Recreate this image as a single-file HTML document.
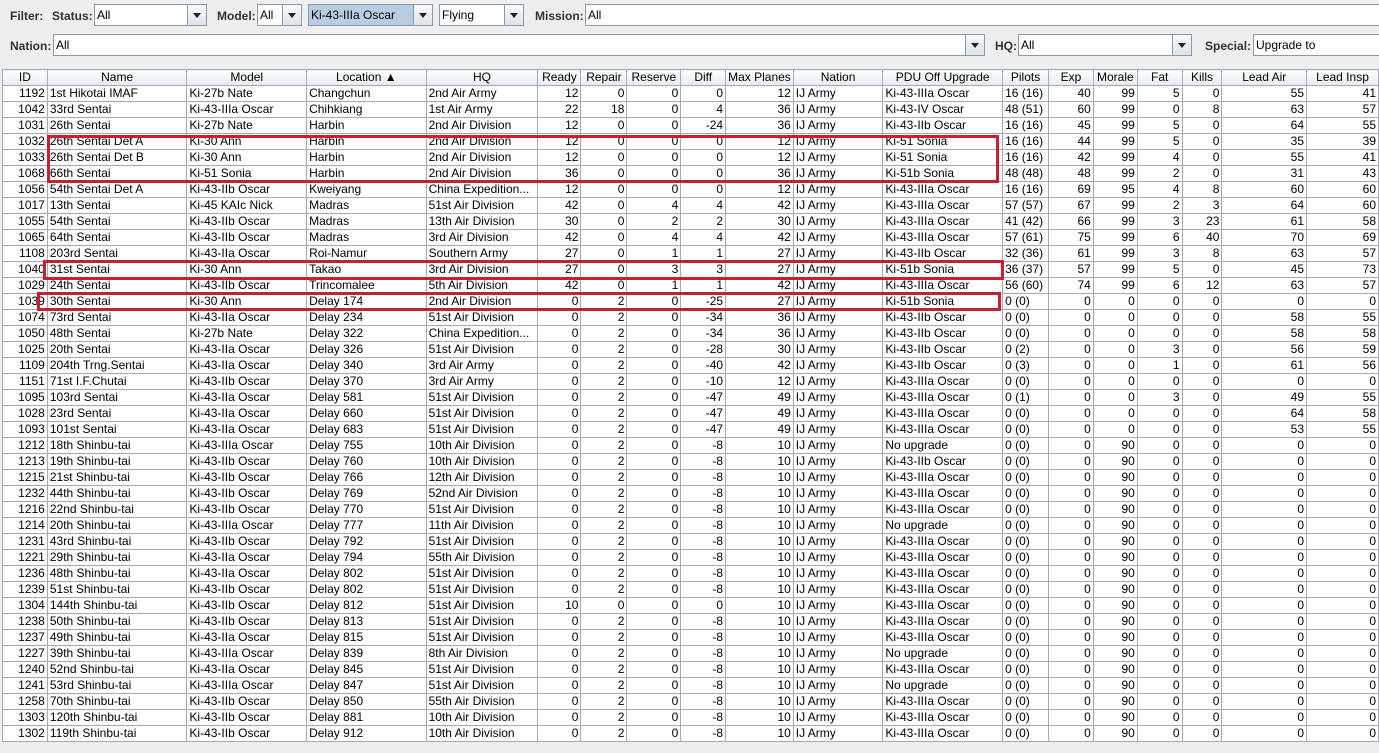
<!DOCTYPE html>
<html><head><meta charset="utf-8"><style>
body{margin:0;width:1379px;height:753px;background:#eeeeee;font-family:"Liberation Sans",Arial,sans-serif;font-size:12px;color:#000;position:relative;overflow:hidden}
.lbl{position:absolute;font-weight:bold;color:#333;top:9px}
.cb{position:absolute;height:22px;border:1px solid #8a9aae;background:#fff;box-sizing:border-box;line-height:20px;padding-left:2px}
.cb .ar{position:absolute;right:0;top:0;width:18px;height:20px;border-left:1px solid #8a9aae;background:linear-gradient(#fafafa,#dde3ea)}
.cb .ar:after{content:"";position:absolute;left:5px;top:8px;border-left:4px solid transparent;border-right:4px solid transparent;border-top:5px solid #222}
table{position:absolute;left:2px;top:69px;border-collapse:collapse;table-layout:fixed;background:#fff;border:1px solid #8e98a8}
td,th{border:1px solid #a3aab6;height:15px;line-height:15px;padding:0 2px;white-space:nowrap;overflow:hidden;font-weight:normal}
th{background:linear-gradient(#fdfdfd,#e6ebf1);text-align:center;height:15px}
td.r{text-align:right}
.red{position:absolute;border:3px solid #c8202c;box-sizing:border-box}
</style></head><body>
<div class="lbl" style="left:10px">Filter:</div>
<div class="lbl" style="left:52px">Status:</div>
<div class="cb" style="left:94px;top:4px;width:113px">All<div class="ar"></div></div>
<div class="lbl" style="left:217px">Model:</div>
<div class="cb" style="left:257px;top:4px;width:45px">All<div class="ar"></div></div>
<div class="cb" style="left:308px;top:4px;width:125px;background:#b8cde2">Ki-43-IIIa Oscar<div class="ar"></div></div>
<div class="cb" style="left:439px;top:4px;width:85px">Flying<div class="ar"></div></div>
<div class="lbl" style="left:535px">Mission:</div>
<div class="cb" style="left:585px;top:4px;width:800px">All</div>
<div class="lbl" style="left:10px;top:39px">Nation:</div>
<div class="cb" style="left:53px;top:34px;width:932px">All<div class="ar"></div></div>
<div class="lbl" style="left:995px;top:39px">HQ:</div>
<div class="cb" style="left:1018px;top:34px;width:174px">All<div class="ar"></div></div>
<div class="lbl" style="left:1205px;top:39px">Special:</div>
<div class="cb" style="left:1253px;top:34px;width:130px">Upgrade to</div>
<table>
<colgroup><col style="width:45px"><col style="width:140px"><col style="width:120px"><col style="width:120px"><col style="width:112px"><col style="width:43px"><col style="width:46px"><col style="width:54px"><col style="width:45px"><col style="width:65px"><col style="width:90px"><col style="width:120px"><col style="width:46px"><col style="width:45px"><col style="width:44px"><col style="width:45px"><col style="width:40px"><col style="width:85px"><col style="width:72px"></colgroup>
<tr><th>ID</th><th>Name</th><th>Model</th><th>Location ▲</th><th>HQ</th><th>Ready</th><th>Repair</th><th>Reserve</th><th>Diff</th><th>Max Planes</th><th>Nation</th><th>PDU Off Upgrade</th><th>Pilots</th><th>Exp</th><th>Morale</th><th>Fat</th><th>Kills</th><th>Lead Air</th><th>Lead Insp</th></tr>
<tr><td class="r">1192</td><td>1st Hikotai IMAF</td><td>Ki-27b Nate</td><td>Changchun</td><td>2nd Air Army</td><td class="r">12</td><td class="r">0</td><td class="r">0</td><td class="r">0</td><td class="r">12</td><td>IJ Army</td><td>Ki-43-IIIa Oscar</td><td>16 (16)</td><td class="r">40</td><td class="r">99</td><td class="r">5</td><td class="r">0</td><td class="r">55</td><td class="r">41</td></tr>
<tr><td class="r">1042</td><td>33rd Sentai</td><td>Ki-43-IIIa Oscar</td><td>Chihkiang</td><td>1st Air Army</td><td class="r">22</td><td class="r">18</td><td class="r">0</td><td class="r">4</td><td class="r">36</td><td>IJ Army</td><td>Ki-43-IV Oscar</td><td>48 (51)</td><td class="r">60</td><td class="r">99</td><td class="r">0</td><td class="r">8</td><td class="r">63</td><td class="r">57</td></tr>
<tr><td class="r">1031</td><td>26th Sentai</td><td>Ki-27b Nate</td><td>Harbin</td><td>2nd Air Division</td><td class="r">12</td><td class="r">0</td><td class="r">0</td><td class="r">-24</td><td class="r">36</td><td>IJ Army</td><td>Ki-43-IIb Oscar</td><td>16 (16)</td><td class="r">45</td><td class="r">99</td><td class="r">5</td><td class="r">0</td><td class="r">64</td><td class="r">55</td></tr>
<tr><td class="r">1032</td><td>26th Sentai Det A</td><td>Ki-30 Ann</td><td>Harbin</td><td>2nd Air Division</td><td class="r">12</td><td class="r">0</td><td class="r">0</td><td class="r">0</td><td class="r">12</td><td>IJ Army</td><td>Ki-51 Sonia</td><td>16 (16)</td><td class="r">44</td><td class="r">99</td><td class="r">5</td><td class="r">0</td><td class="r">35</td><td class="r">39</td></tr>
<tr><td class="r">1033</td><td>26th Sentai Det B</td><td>Ki-30 Ann</td><td>Harbin</td><td>2nd Air Division</td><td class="r">12</td><td class="r">0</td><td class="r">0</td><td class="r">0</td><td class="r">12</td><td>IJ Army</td><td>Ki-51 Sonia</td><td>16 (16)</td><td class="r">42</td><td class="r">99</td><td class="r">4</td><td class="r">0</td><td class="r">55</td><td class="r">41</td></tr>
<tr><td class="r">1068</td><td>66th Sentai</td><td>Ki-51 Sonia</td><td>Harbin</td><td>2nd Air Division</td><td class="r">36</td><td class="r">0</td><td class="r">0</td><td class="r">0</td><td class="r">36</td><td>IJ Army</td><td>Ki-51b Sonia</td><td>48 (48)</td><td class="r">48</td><td class="r">99</td><td class="r">2</td><td class="r">0</td><td class="r">31</td><td class="r">43</td></tr>
<tr><td class="r">1056</td><td>54th Sentai Det A</td><td>Ki-43-IIb Oscar</td><td>Kweiyang</td><td>China Expedition...</td><td class="r">12</td><td class="r">0</td><td class="r">0</td><td class="r">0</td><td class="r">12</td><td>IJ Army</td><td>Ki-43-IIIa Oscar</td><td>16 (16)</td><td class="r">69</td><td class="r">95</td><td class="r">4</td><td class="r">8</td><td class="r">60</td><td class="r">60</td></tr>
<tr><td class="r">1017</td><td>13th Sentai</td><td>Ki-45 KAIc Nick</td><td>Madras</td><td>51st Air Division</td><td class="r">42</td><td class="r">0</td><td class="r">4</td><td class="r">4</td><td class="r">42</td><td>IJ Army</td><td>Ki-43-IIIa Oscar</td><td>57 (57)</td><td class="r">67</td><td class="r">99</td><td class="r">2</td><td class="r">3</td><td class="r">64</td><td class="r">60</td></tr>
<tr><td class="r">1055</td><td>54th Sentai</td><td>Ki-43-IIb Oscar</td><td>Madras</td><td>13th Air Division</td><td class="r">30</td><td class="r">0</td><td class="r">2</td><td class="r">2</td><td class="r">30</td><td>IJ Army</td><td>Ki-43-IIIa Oscar</td><td>41 (42)</td><td class="r">66</td><td class="r">99</td><td class="r">3</td><td class="r">23</td><td class="r">61</td><td class="r">58</td></tr>
<tr><td class="r">1065</td><td>64th Sentai</td><td>Ki-43-IIb Oscar</td><td>Madras</td><td>3rd Air Division</td><td class="r">42</td><td class="r">0</td><td class="r">4</td><td class="r">4</td><td class="r">42</td><td>IJ Army</td><td>Ki-43-IIIa Oscar</td><td>57 (61)</td><td class="r">75</td><td class="r">99</td><td class="r">6</td><td class="r">40</td><td class="r">70</td><td class="r">69</td></tr>
<tr><td class="r">1108</td><td>203rd Sentai</td><td>Ki-43-IIa Oscar</td><td>Roi-Namur</td><td>Southern Army</td><td class="r">27</td><td class="r">0</td><td class="r">1</td><td class="r">1</td><td class="r">27</td><td>IJ Army</td><td>Ki-43-IIb Oscar</td><td>32 (36)</td><td class="r">61</td><td class="r">99</td><td class="r">3</td><td class="r">8</td><td class="r">63</td><td class="r">57</td></tr>
<tr><td class="r">1040</td><td>31st Sentai</td><td>Ki-30 Ann</td><td>Takao</td><td>3rd Air Division</td><td class="r">27</td><td class="r">0</td><td class="r">3</td><td class="r">3</td><td class="r">27</td><td>IJ Army</td><td>Ki-51b Sonia</td><td>36 (37)</td><td class="r">57</td><td class="r">99</td><td class="r">5</td><td class="r">0</td><td class="r">45</td><td class="r">73</td></tr>
<tr><td class="r">1029</td><td>24th Sentai</td><td>Ki-43-IIb Oscar</td><td>Trincomalee</td><td>5th Air Division</td><td class="r">42</td><td class="r">0</td><td class="r">1</td><td class="r">1</td><td class="r">42</td><td>IJ Army</td><td>Ki-43-IIIa Oscar</td><td>56 (60)</td><td class="r">74</td><td class="r">99</td><td class="r">6</td><td class="r">12</td><td class="r">63</td><td class="r">57</td></tr>
<tr><td class="r">1039</td><td>30th Sentai</td><td>Ki-30 Ann</td><td>Delay 174</td><td>2nd Air Division</td><td class="r">0</td><td class="r">2</td><td class="r">0</td><td class="r">-25</td><td class="r">27</td><td>IJ Army</td><td>Ki-51b Sonia</td><td>0 (0)</td><td class="r">0</td><td class="r">0</td><td class="r">0</td><td class="r">0</td><td class="r">0</td><td class="r">0</td></tr>
<tr><td class="r">1074</td><td>73rd Sentai</td><td>Ki-43-IIa Oscar</td><td>Delay 234</td><td>51st Air Division</td><td class="r">0</td><td class="r">2</td><td class="r">0</td><td class="r">-34</td><td class="r">36</td><td>IJ Army</td><td>Ki-43-IIb Oscar</td><td>0 (0)</td><td class="r">0</td><td class="r">0</td><td class="r">0</td><td class="r">0</td><td class="r">58</td><td class="r">55</td></tr>
<tr><td class="r">1050</td><td>48th Sentai</td><td>Ki-27b Nate</td><td>Delay 322</td><td>China Expedition...</td><td class="r">0</td><td class="r">2</td><td class="r">0</td><td class="r">-34</td><td class="r">36</td><td>IJ Army</td><td>Ki-43-IIb Oscar</td><td>0 (0)</td><td class="r">0</td><td class="r">0</td><td class="r">0</td><td class="r">0</td><td class="r">58</td><td class="r">58</td></tr>
<tr><td class="r">1025</td><td>20th Sentai</td><td>Ki-43-IIa Oscar</td><td>Delay 326</td><td>51st Air Division</td><td class="r">0</td><td class="r">2</td><td class="r">0</td><td class="r">-28</td><td class="r">30</td><td>IJ Army</td><td>Ki-43-IIb Oscar</td><td>0 (2)</td><td class="r">0</td><td class="r">0</td><td class="r">3</td><td class="r">0</td><td class="r">56</td><td class="r">59</td></tr>
<tr><td class="r">1109</td><td>204th Trng.Sentai</td><td>Ki-43-IIa Oscar</td><td>Delay 340</td><td>3rd Air Army</td><td class="r">0</td><td class="r">2</td><td class="r">0</td><td class="r">-40</td><td class="r">42</td><td>IJ Army</td><td>Ki-43-IIb Oscar</td><td>0 (3)</td><td class="r">0</td><td class="r">0</td><td class="r">1</td><td class="r">0</td><td class="r">61</td><td class="r">56</td></tr>
<tr><td class="r">1151</td><td>71st I.F.Chutai</td><td>Ki-43-IIb Oscar</td><td>Delay 370</td><td>3rd Air Army</td><td class="r">0</td><td class="r">2</td><td class="r">0</td><td class="r">-10</td><td class="r">12</td><td>IJ Army</td><td>Ki-43-IIIa Oscar</td><td>0 (0)</td><td class="r">0</td><td class="r">0</td><td class="r">0</td><td class="r">0</td><td class="r">0</td><td class="r">0</td></tr>
<tr><td class="r">1095</td><td>103rd Sentai</td><td>Ki-43-IIa Oscar</td><td>Delay 581</td><td>51st Air Division</td><td class="r">0</td><td class="r">2</td><td class="r">0</td><td class="r">-47</td><td class="r">49</td><td>IJ Army</td><td>Ki-43-IIIa Oscar</td><td>0 (1)</td><td class="r">0</td><td class="r">0</td><td class="r">3</td><td class="r">0</td><td class="r">49</td><td class="r">55</td></tr>
<tr><td class="r">1028</td><td>23rd Sentai</td><td>Ki-43-IIa Oscar</td><td>Delay 660</td><td>51st Air Division</td><td class="r">0</td><td class="r">2</td><td class="r">0</td><td class="r">-47</td><td class="r">49</td><td>IJ Army</td><td>Ki-43-IIIa Oscar</td><td>0 (0)</td><td class="r">0</td><td class="r">0</td><td class="r">0</td><td class="r">0</td><td class="r">64</td><td class="r">58</td></tr>
<tr><td class="r">1093</td><td>101st Sentai</td><td>Ki-43-IIa Oscar</td><td>Delay 683</td><td>51st Air Division</td><td class="r">0</td><td class="r">2</td><td class="r">0</td><td class="r">-47</td><td class="r">49</td><td>IJ Army</td><td>Ki-43-IIIa Oscar</td><td>0 (0)</td><td class="r">0</td><td class="r">0</td><td class="r">0</td><td class="r">0</td><td class="r">53</td><td class="r">55</td></tr>
<tr><td class="r">1212</td><td>18th Shinbu-tai</td><td>Ki-43-IIIa Oscar</td><td>Delay 755</td><td>10th Air Division</td><td class="r">0</td><td class="r">2</td><td class="r">0</td><td class="r">-8</td><td class="r">10</td><td>IJ Army</td><td>No upgrade</td><td>0 (0)</td><td class="r">0</td><td class="r">90</td><td class="r">0</td><td class="r">0</td><td class="r">0</td><td class="r">0</td></tr>
<tr><td class="r">1213</td><td>19th Shinbu-tai</td><td>Ki-43-IIb Oscar</td><td>Delay 760</td><td>10th Air Division</td><td class="r">0</td><td class="r">2</td><td class="r">0</td><td class="r">-8</td><td class="r">10</td><td>IJ Army</td><td>Ki-43-IIb Oscar</td><td>0 (0)</td><td class="r">0</td><td class="r">90</td><td class="r">0</td><td class="r">0</td><td class="r">0</td><td class="r">0</td></tr>
<tr><td class="r">1215</td><td>21st Shinbu-tai</td><td>Ki-43-IIb Oscar</td><td>Delay 766</td><td>12th Air Division</td><td class="r">0</td><td class="r">2</td><td class="r">0</td><td class="r">-8</td><td class="r">10</td><td>IJ Army</td><td>Ki-43-IIIa Oscar</td><td>0 (0)</td><td class="r">0</td><td class="r">90</td><td class="r">0</td><td class="r">0</td><td class="r">0</td><td class="r">0</td></tr>
<tr><td class="r">1232</td><td>44th Shinbu-tai</td><td>Ki-43-IIb Oscar</td><td>Delay 769</td><td>52nd Air Division</td><td class="r">0</td><td class="r">2</td><td class="r">0</td><td class="r">-8</td><td class="r">10</td><td>IJ Army</td><td>Ki-43-IIIa Oscar</td><td>0 (0)</td><td class="r">0</td><td class="r">90</td><td class="r">0</td><td class="r">0</td><td class="r">0</td><td class="r">0</td></tr>
<tr><td class="r">1216</td><td>22nd Shinbu-tai</td><td>Ki-43-IIb Oscar</td><td>Delay 770</td><td>51st Air Division</td><td class="r">0</td><td class="r">2</td><td class="r">0</td><td class="r">-8</td><td class="r">10</td><td>IJ Army</td><td>Ki-43-IIIa Oscar</td><td>0 (0)</td><td class="r">0</td><td class="r">90</td><td class="r">0</td><td class="r">0</td><td class="r">0</td><td class="r">0</td></tr>
<tr><td class="r">1214</td><td>20th Shinbu-tai</td><td>Ki-43-IIIa Oscar</td><td>Delay 777</td><td>11th Air Division</td><td class="r">0</td><td class="r">2</td><td class="r">0</td><td class="r">-8</td><td class="r">10</td><td>IJ Army</td><td>No upgrade</td><td>0 (0)</td><td class="r">0</td><td class="r">90</td><td class="r">0</td><td class="r">0</td><td class="r">0</td><td class="r">0</td></tr>
<tr><td class="r">1231</td><td>43rd Shinbu-tai</td><td>Ki-43-IIb Oscar</td><td>Delay 792</td><td>51st Air Division</td><td class="r">0</td><td class="r">2</td><td class="r">0</td><td class="r">-8</td><td class="r">10</td><td>IJ Army</td><td>Ki-43-IIIa Oscar</td><td>0 (0)</td><td class="r">0</td><td class="r">90</td><td class="r">0</td><td class="r">0</td><td class="r">0</td><td class="r">0</td></tr>
<tr><td class="r">1221</td><td>29th Shinbu-tai</td><td>Ki-43-IIa Oscar</td><td>Delay 794</td><td>55th Air Division</td><td class="r">0</td><td class="r">2</td><td class="r">0</td><td class="r">-8</td><td class="r">10</td><td>IJ Army</td><td>Ki-43-IIIa Oscar</td><td>0 (0)</td><td class="r">0</td><td class="r">90</td><td class="r">0</td><td class="r">0</td><td class="r">0</td><td class="r">0</td></tr>
<tr><td class="r">1236</td><td>48th Shinbu-tai</td><td>Ki-43-IIa Oscar</td><td>Delay 802</td><td>51st Air Division</td><td class="r">0</td><td class="r">2</td><td class="r">0</td><td class="r">-8</td><td class="r">10</td><td>IJ Army</td><td>Ki-43-IIIa Oscar</td><td>0 (0)</td><td class="r">0</td><td class="r">90</td><td class="r">0</td><td class="r">0</td><td class="r">0</td><td class="r">0</td></tr>
<tr><td class="r">1239</td><td>51st Shinbu-tai</td><td>Ki-43-IIb Oscar</td><td>Delay 802</td><td>51st Air Division</td><td class="r">0</td><td class="r">2</td><td class="r">0</td><td class="r">-8</td><td class="r">10</td><td>IJ Army</td><td>Ki-43-IIIa Oscar</td><td>0 (0)</td><td class="r">0</td><td class="r">90</td><td class="r">0</td><td class="r">0</td><td class="r">0</td><td class="r">0</td></tr>
<tr><td class="r">1304</td><td>144th Shinbu-tai</td><td>Ki-43-IIb Oscar</td><td>Delay 812</td><td>51st Air Division</td><td class="r">10</td><td class="r">0</td><td class="r">0</td><td class="r">0</td><td class="r">10</td><td>IJ Army</td><td>Ki-43-IIIa Oscar</td><td>0 (0)</td><td class="r">0</td><td class="r">90</td><td class="r">0</td><td class="r">0</td><td class="r">0</td><td class="r">0</td></tr>
<tr><td class="r">1238</td><td>50th Shinbu-tai</td><td>Ki-43-IIb Oscar</td><td>Delay 813</td><td>51st Air Division</td><td class="r">0</td><td class="r">2</td><td class="r">0</td><td class="r">-8</td><td class="r">10</td><td>IJ Army</td><td>Ki-43-IIIa Oscar</td><td>0 (0)</td><td class="r">0</td><td class="r">90</td><td class="r">0</td><td class="r">0</td><td class="r">0</td><td class="r">0</td></tr>
<tr><td class="r">1237</td><td>49th Shinbu-tai</td><td>Ki-43-IIa Oscar</td><td>Delay 815</td><td>51st Air Division</td><td class="r">0</td><td class="r">2</td><td class="r">0</td><td class="r">-8</td><td class="r">10</td><td>IJ Army</td><td>Ki-43-IIIa Oscar</td><td>0 (0)</td><td class="r">0</td><td class="r">90</td><td class="r">0</td><td class="r">0</td><td class="r">0</td><td class="r">0</td></tr>
<tr><td class="r">1227</td><td>39th Shinbu-tai</td><td>Ki-43-IIIa Oscar</td><td>Delay 839</td><td>8th Air Division</td><td class="r">0</td><td class="r">2</td><td class="r">0</td><td class="r">-8</td><td class="r">10</td><td>IJ Army</td><td>No upgrade</td><td>0 (0)</td><td class="r">0</td><td class="r">90</td><td class="r">0</td><td class="r">0</td><td class="r">0</td><td class="r">0</td></tr>
<tr><td class="r">1240</td><td>52nd Shinbu-tai</td><td>Ki-43-IIa Oscar</td><td>Delay 845</td><td>51st Air Division</td><td class="r">0</td><td class="r">2</td><td class="r">0</td><td class="r">-8</td><td class="r">10</td><td>IJ Army</td><td>Ki-43-IIIa Oscar</td><td>0 (0)</td><td class="r">0</td><td class="r">90</td><td class="r">0</td><td class="r">0</td><td class="r">0</td><td class="r">0</td></tr>
<tr><td class="r">1241</td><td>53rd Shinbu-tai</td><td>Ki-43-IIIa Oscar</td><td>Delay 847</td><td>51st Air Division</td><td class="r">0</td><td class="r">2</td><td class="r">0</td><td class="r">-8</td><td class="r">10</td><td>IJ Army</td><td>No upgrade</td><td>0 (0)</td><td class="r">0</td><td class="r">90</td><td class="r">0</td><td class="r">0</td><td class="r">0</td><td class="r">0</td></tr>
<tr><td class="r">1258</td><td>70th Shinbu-tai</td><td>Ki-43-IIb Oscar</td><td>Delay 850</td><td>55th Air Division</td><td class="r">0</td><td class="r">2</td><td class="r">0</td><td class="r">-8</td><td class="r">10</td><td>IJ Army</td><td>Ki-43-IIIa Oscar</td><td>0 (0)</td><td class="r">0</td><td class="r">90</td><td class="r">0</td><td class="r">0</td><td class="r">0</td><td class="r">0</td></tr>
<tr><td class="r">1303</td><td>120th Shinbu-tai</td><td>Ki-43-IIb Oscar</td><td>Delay 881</td><td>10th Air Division</td><td class="r">0</td><td class="r">2</td><td class="r">0</td><td class="r">-8</td><td class="r">10</td><td>IJ Army</td><td>Ki-43-IIIa Oscar</td><td>0 (0)</td><td class="r">0</td><td class="r">90</td><td class="r">0</td><td class="r">0</td><td class="r">0</td><td class="r">0</td></tr>
<tr><td class="r">1302</td><td>119th Shinbu-tai</td><td>Ki-43-IIb Oscar</td><td>Delay 912</td><td>10th Air Division</td><td class="r">0</td><td class="r">2</td><td class="r">0</td><td class="r">-8</td><td class="r">10</td><td>IJ Army</td><td>Ki-43-IIIa Oscar</td><td>0 (0)</td><td class="r">0</td><td class="r">90</td><td class="r">0</td><td class="r">0</td><td class="r">0</td><td class="r">0</td></tr>
</table>
<div class="red" style="left:47px;top:135px;width:952px;height:48px"></div>
<div class="red" style="left:43px;top:260px;width:961px;height:20px"></div>
<div class="red" style="left:37px;top:292px;width:964px;height:19px"></div>
</body></html>
